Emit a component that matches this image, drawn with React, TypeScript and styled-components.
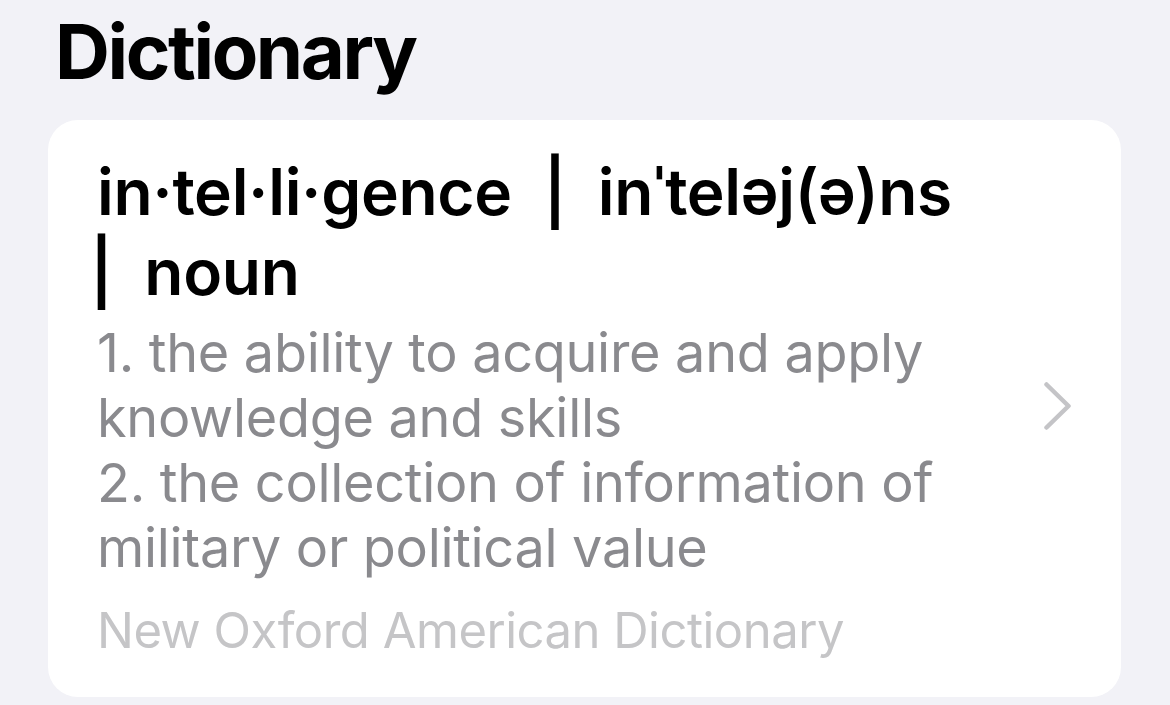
import React from "react";
import styled, { createGlobalStyle } from "styled-components";

const Global = createGlobalStyle`
  html, body { margin: 0; padding: 0; background: #f2f2f7; }
  body { font-family: Inter, "Noto Sans", sans-serif; -webkit-font-smoothing: antialiased; }
`;

const Page = styled.div`
  width: 1170px;
  height: 705px;
  overflow: hidden;
  box-sizing: border-box;
  padding: 0 49px 0 48px;
  display: flex;
  flex-direction: column;
  background: #f2f2f7;
`;

const Title = styled.h1`
  margin: 0;
  padding: 7px 0 0 7px;
  font-family: Inter, sans-serif;
  font-size: 76px;
  font-weight: 700;
  line-height: 88px;
  letter-spacing: -2.4px;
  color: #000;
  height: 108px;
  box-sizing: border-box;
`;

const Card = styled.div`
  margin-top: 12px;
  background: #fff;
  border-radius: 30px;
  display: flex;
  align-items: center;
  padding: 21px 47px 26px 49px;
  box-sizing: border-box;
  height: 577px;
`;

const Body = styled.div`
  flex: 1;
  display: flex;
  flex-direction: column;
`;

const Headword = styled.div`
  font-family: Inter, sans-serif;
  font-weight: 600;
  font-size: 64px;
  line-height: 80px;
  letter-spacing: -0.3px;
  color: #000;
`;

const Pipe = styled.span<{ $lead?: boolean }>`
  font-weight: 600;
  margin-left: ${(p) => (p.$lead ? "-7px" : "0")};
`;

const Definition = styled.div`
  margin-top: 8px;
  font-family: Inter, sans-serif;
  font-weight: 400;
  font-size: 54px;
  line-height: 65px;
  letter-spacing: -0.3px;
  color: #8a8a8e;
`;

const Source = styled.div`
  margin-top: 21px;
  font-family: Inter, sans-serif;
  font-weight: 400;
  font-size: 49px;
  line-height: 60px;
  letter-spacing: -0.5px;
  color: #c5c5c7;
`;

const Chevron = styled.svg`
  flex: none;
  width: 30px;
  height: 48px;
`;

export default function App() {
  return (
    <Page>
      <Global />
      <Title>Dictionary</Title>
      <Card>
        <Body>
          <Headword>
            in·tel·li·gence&nbsp; <Pipe>|</Pipe>&nbsp; inˈteləj(ə)ns
            <br />
            <Pipe $lead>|</Pipe>&nbsp; noun
          </Headword>
          <Definition>
            1. the ability to acquire and apply
            <br />
            knowledge and skills
            <br />
            2. the collection of information of
            <br />
            military or political value
          </Definition>
          <Source>New Oxford American Dictionary</Source>
        </Body>
        <Chevron viewBox="0 0 30 48" fill="none">
          <path
            d="M2.5 2.5 L24.5 24 L2.5 45.5"
            stroke="#c4c4c7"
            strokeWidth="4.5"
            strokeLinecap="round"
            strokeLinejoin="round"
          />
        </Chevron>
      </Card>
    </Page>
  );
}
